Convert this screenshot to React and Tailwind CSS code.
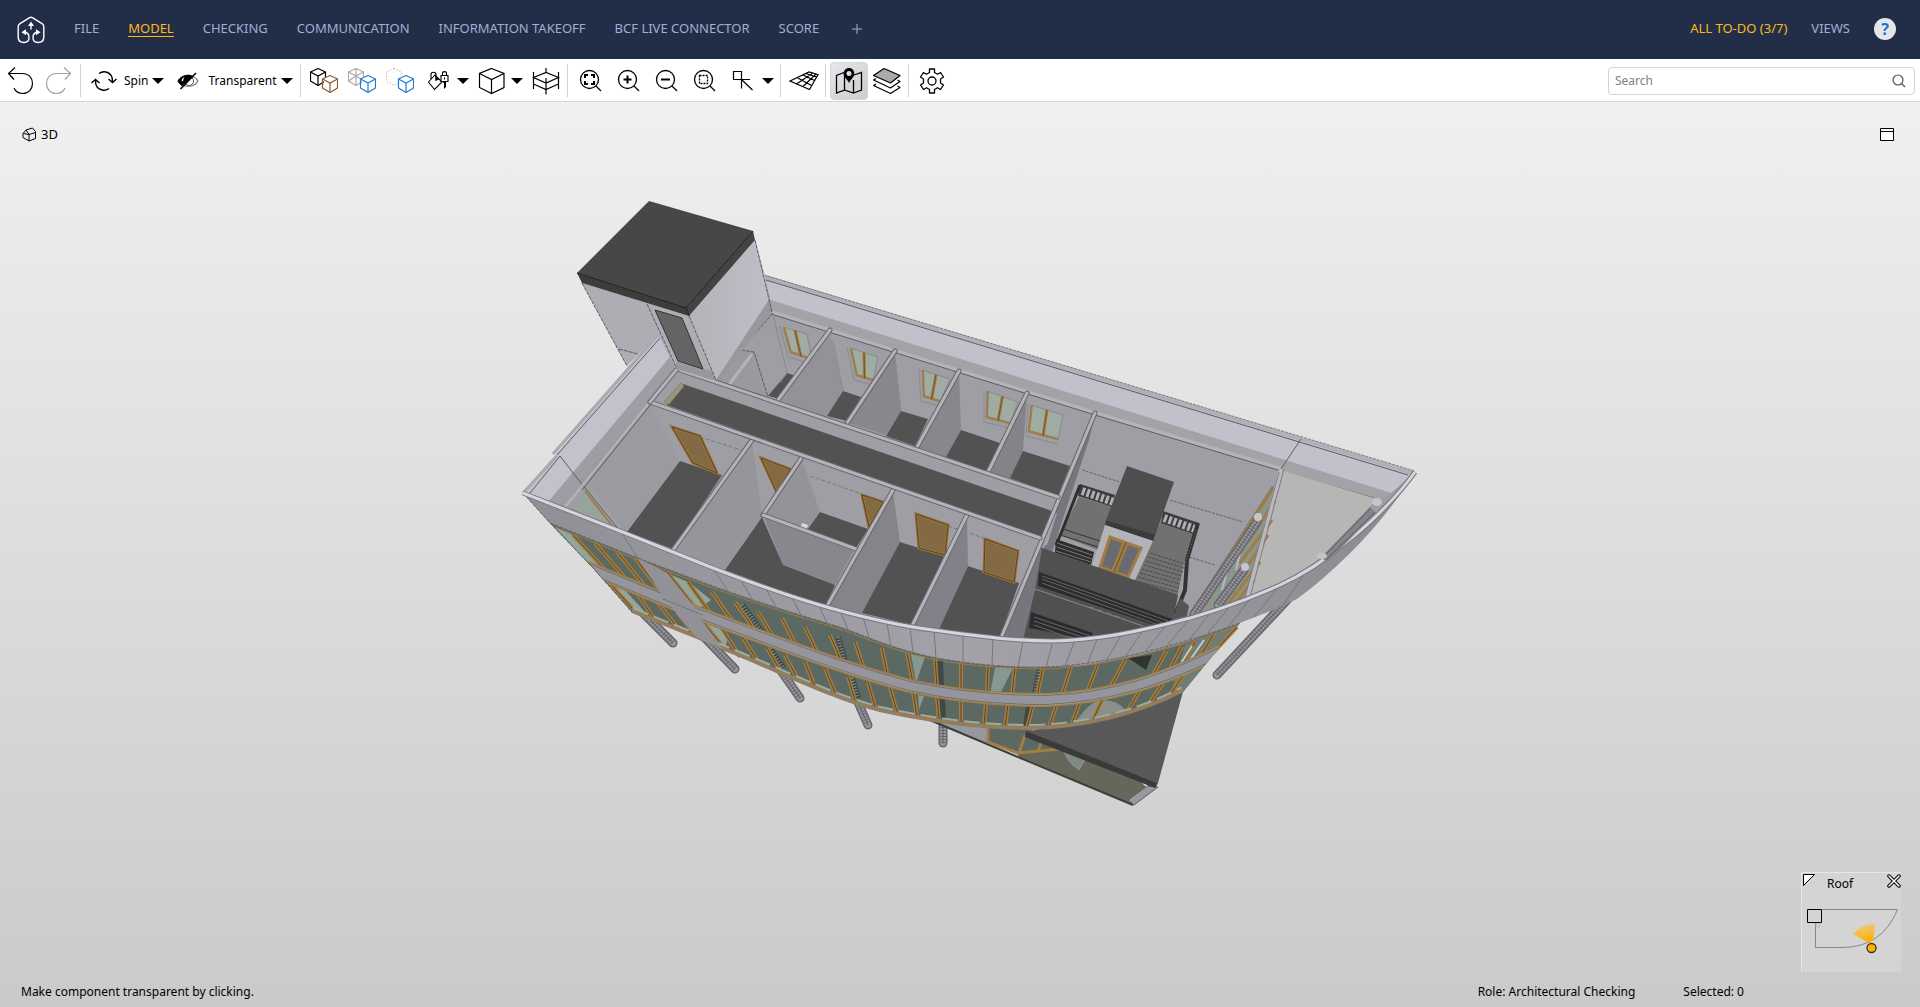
import React, { useState } from "react";
import clsx from "clsx";

const menuItems = [
  "FILE",
  "MODEL",
  "CHECKING",
  "COMMUNICATION",
  "INFORMATION TAKEOFF",
  "BCF LIVE CONNECTOR",
  "SCORE",
];

/* ---------- icons ---------- */

function Icon({ children, size = 28, className }) {
  return (
    <svg
      width={size}
      height={size}
      viewBox={`0 0 ${size} ${size}`}
      fill="none"
      stroke="currentColor"
      className={clsx("shrink-0", className)}
      aria-hidden="true"
    >
      {children}
    </svg>
  );
}

function Logo() {
  return (
    <Icon className="text-white">
      <g strokeWidth="1.4" strokeLinejoin="round" strokeLinecap="round">
        <path d="M7 26.500C3 26.500 1.200 24.500 1.200 21V10.500Q1.200 8.700 2.600 7.800L12.600 1.600Q14 .8 15.400 1.600L25.400 7.800Q26.800 8.700 26.800 10.500V21C26.800 24.500 25 26.500 21 26.500C17.500 26.500 16 24.500 16 21.500C16 18 17.800 16.300 21 16.300" />
        <path d="M7 26.500C10.500 26.500 12 24.500 12 21.500C12 18 10.200 16.300 7 16.300" />
        <path d="M14 13V8" />
      </g>
      <g fill="currentColor" stroke="none">
        <path d="M14 5.500L17 10H11Z" />
        <path d="M4.500 16.300L9 13.300V19.300Z" />
        <path d="M23.500 16.300L19 13.300V19.300Z" />
      </g>
    </Icon>
  );
}

function Caret() {
  return (
    <svg width="12" height="6" viewBox="0 0 12 6" fill="black" aria-hidden="true">
      <path d="M0 0H12L6 6Z" />
    </svg>
  );
}

function UndoIcon() {
  return (
    <Icon>
      <path d="M8 0.500L1.500 6.500L7 12.500M1.500 6.500H15C22 6.500 25.500 11 25.500 16.500C25.500 22 21.500 26.500 16 26.500C11.500 26.500 8.500 24.500 7 21" strokeWidth="1.2" />
    </Icon>
  );
}

function RedoIcon() {
  return (
    <Icon className="text-gray-400">
      <path d="M19 0.500L25.500 6.500L20 12.500M25.500 6.500H12C5 6.500 1.500 11 1.500 16.500C1.500 22 5.500 26.500 11 26.500C15.500 26.500 18.500 24.500 20 21" strokeWidth="1.2" />
    </Icon>
  );
}

function SpinIcon() {
  return (
    <Icon>
      <g strokeWidth="1.4">
        <path d="M9 6.500C13 3.500 19 4.500 21.500 9C22.300 10.500 22.500 12 22.500 14.500M18.500 12L22.500 15.500L26.500 12" />
        <path d="M19 21.500C15 24.500 9 23.500 6.500 19C5.700 17.500 5.500 16 5.500 13.500M1.500 16L5.500 12.500L9.500 16" />
      </g>
    </Icon>
  );
}

function EyeOffIcon() {
  return (
    <Icon>
      <path d="M4 14C8 7 20 7 24 14C20 21 8 21 4 14Z" strokeWidth="1.2" stroke="#777" />
      <path d="M4 14C7.500 8 15 7 19 9.500L8 18.500C6.500 17.500 5 16 4 14Z" fill="black" stroke="black" />
      <path d="M7.500 13.500C8 11.500 9 10.500 11 10L9 14.500Z" fill="white" stroke="none" />
      <circle cx="15" cy="14" r="4.500" stroke="#555" />
      <path d="M18 10A4.500 4.500 0 0 0 11 16Z" fill="black" />
      <path d="M22 6L6.500 22" strokeWidth="1.600" />
    </Icon>
  );
}

function MiniCube({ x, y, stroke, ghost, dotted }) {
  return (
    <g transform={`translate(${x} ${y})`} stroke={stroke} strokeWidth="1.2" strokeDasharray={dotted ? "1 2" : undefined}>
      <path d="M8 0.500L15.500 4V13L8 17.500L0.500 13V4Z" strokeLinejoin="round" />
      {!dotted && <path d="M0.500 4L8 8L15.500 4M8 8V17.500" />}
      {ghost && <path d="M8 0.500V8M0.500 13L8 8L15.500 13" />}
    </g>
  );
}

function PaintLockIcon() {
  return (
    <Icon>
      <g strokeWidth="1.1">
        <path d="M4.500 15L11 8L18 15L10.500 22.500Z" />
        <path d="M7 12V7.500C7 4.500 12 4.500 12 7.500V14" />
        <path d="M18.500 9V6.500C18.500 4 22.500 4 22.500 6.500V9" />
        <path d="M17 8.500H24V14.500H17Z" fill="white" />
        <path d="M20.500 10.500V12.500" />
      </g>
      <path d="M11.500 9L15.500 12.500L11.500 13.500ZM18 14.500H22V20L20 22V16Z" fill="black" stroke="none" />
    </Icon>
  );
}

function CubeIcon() {
  return (
    <Icon>
      <path d="M13.500 1.500L26 6.500V20.500L13.500 26.500L1.500 20.500V6.500ZM1.500 6.500L13.500 12.500L26 6.500M13.500 12.500V26.500" strokeWidth="1.2" />
    </Icon>
  );
}

function SectionIcon() {
  return (
    <Icon>
      <path d="M1.500 5V22M26.500 5V22M14 1V5M14 11V27.500M1.500 10.500L14 5.500L26.500 10.500L14 16ZM1.500 17L14 22.500L26.500 17" strokeWidth="1.200" />
    </Icon>
  );
}

function ZoomIcon({ children }) {
  return (
    <Icon>
      <circle cx="12.500" cy="12.500" r="9" strokeWidth="1.300" />
      <path d="M19 19L24 24" strokeWidth="1.300" />
      {children}
    </Icon>
  );
}

function PickIcon() {
  return (
    <Icon>
      <path d="M4.500 4.500H12.500V12.500H4.500ZM12.500 21.500V12.500H21M12.500 12.500L23.500 23" strokeWidth="1.200" />
    </Icon>
  );
}

function GridPlaneIcon() {
  return (
    <Icon size={30}>
      <path d="M1 15L20 6L29 8.500L20.500 23.500ZM8 11.500L22.500 19.500M14 9L25.500 14.500M7.500 18L24 7M14 20.500L27 8M17 7.500L27.500 11" strokeWidth="1.200" />
    </Icon>
  );
}

function MapPinIcon() {
  return (
    <Icon>
      <path d="M9.500 5.500V23L1.500 26V8.500L9 5.500M9.500 23L18.500 26V13M18.500 26L26.500 23V5.500L19 8" strokeWidth="1.300" />
      <path d="M14 1C17.500 1 19.300 3.500 19.300 6.500C19.300 10 16 12 14 16C12 12 8.700 10 8.700 6.500C8.700 3.500 10.500 1 14 1ZM14 4A2.500 2.500 0 1 0 14 9A2.500 2.500 0 1 0 14 4Z" fill="black" fillRule="evenodd" stroke="none" />
    </Icon>
  );
}

function LayersIcon() {
  return (
    <Icon>
      <g strokeWidth="1.200" strokeLinejoin="round">
        <path d="M3 17L0.500 18.500L17.500 26.500L27 20.500L24.500 19" />
        <path d="M3 11.500L0.500 13L17.500 21L27 14.500L24.500 13" fill="white" />
        <path d="M11 1.500L27 8.500L17.500 16L0.500 8.500Z" fill="#aaaaaa" />
      </g>
    </Icon>
  );
}

function GearIcon() {
  return (
    <Icon>
      <g strokeWidth="1.300" strokeLinejoin="round">
        <circle cx="14" cy="14" r="4" />
        <path d="M11.500 2H16.500V5.500L19.500 7.200L22.500 5.500L25.500 10L22.500 12V16L25.500 18L22.500 22.500L19.500 20.800L16.500 22.500V26H11.500V22.500L8.500 20.800L5.500 22.500L2.500 18L5.500 16V12L2.500 10L5.500 5.500L8.500 7.200L11.500 5.500Z" />
      </g>
    </Icon>
  );
}

/* ---------- toolbar ---------- */

function ToolButton({ label, active, children }) {
  return (
    <button
      type="button"
      aria-label={label}
      className={clsx(
        "flex h-[38px] w-[38px] shrink-0 items-center justify-center rounded",
        active && "border border-gray-300 bg-linear-to-br from-gray-200 to-[#cccccc]"
      )}
    >
      {children}
    </button>
  );
}

function MenuCaret({ label }) {
  return (
    <button type="button" aria-label={label} className="mr-1 flex h-[38px] w-3 shrink-0 items-center">
      <Caret />
    </button>
  );
}

function ModeButton({ icon, children }) {
  return (
    <button type="button" className="mr-[5px] flex h-[38px] shrink-0 items-center">
      <span className="flex w-[38px] justify-center">{icon}</span>
      <span className="ml-px">{children}</span>
      <span className="ml-1">
        <Caret />
      </span>
    </button>
  );
}

function Separator() {
  return <div className="mr-1 ml-0.5 h-[33px] w-px shrink-0 bg-[#d0d0d0]" />;
}

function Toolbar() {
  const [query, setQuery] = useState("");

  return (
    <div className="flex h-[43px] shrink-0 items-center border-b border-[#d4d4d4] bg-white pt-px pr-[5px] pl-0.5">
      <ToolButton label="Undo"><UndoIcon /></ToolButton>
      <ToolButton label="Redo"><RedoIcon /></ToolButton>
      <Separator />
      <ModeButton icon={<SpinIcon />}>Spin</ModeButton>
      <ModeButton icon={<EyeOffIcon />}>Transparent</ModeButton>
      <Separator />
      <ToolButton label="Show all">
        <Icon>
          <MiniCube x={0} y={1} stroke="black" />
          <rect x="14" y="10" width="12" height="14" fill="white" stroke="none" />
          <MiniCube x={12} y={8} stroke="#8a5a33" />
        </Icon>
      </ToolButton>
      <ToolButton label="Show others transparent">
        <Icon>
          <MiniCube x={0} y={1} stroke="#aaaaaa" ghost />
          <rect x="14" y="10" width="12" height="14" fill="white" stroke="none" />
          <MiniCube x={12} y={8} stroke="#1b7fd6" />
        </Icon>
      </ToolButton>
      <ToolButton label="Hide others">
        <Icon>
          <MiniCube x={0} y={1} stroke="#aaaaaa" dotted />
          <rect x="12" y="9" width="14" height="16" fill="white" stroke="none" />
          <MiniCube x={12} y={8} stroke="#1b7fd6" />
        </Icon>
      </ToolButton>
      <ToolButton label="Coloring"><PaintLockIcon /></ToolButton>
      <MenuCaret label="Coloring options" />
      <ToolButton label="View direction"><CubeIcon /></ToolButton>
      <MenuCaret label="View direction options" />
      <ToolButton label="Section box"><SectionIcon /></ToolButton>
      <Separator />
      <ToolButton label="Zoom to fit">
        <ZoomIcon>
          <path d="M8 11V8H11M14 8H17V11M17 14V17H14M11 17H8V14" strokeWidth="2" />
        </ZoomIcon>
      </ToolButton>
      <ToolButton label="Zoom in">
        <ZoomIcon>
          <path d="M8.500 12.500H16.500M12.500 8.500V16.500" strokeWidth="2" />
        </ZoomIcon>
      </ToolButton>
      <ToolButton label="Zoom out">
        <ZoomIcon>
          <path d="M8 12.500H17" strokeWidth="2" />
        </ZoomIcon>
      </ToolButton>
      <ToolButton label="Zoom window">
        <ZoomIcon>
          <path d="M8.500 8.500H16.500V16.500H8.500Z" strokeWidth="1.300" strokeDasharray="2 1" />
        </ZoomIcon>
      </ToolButton>
      <ToolButton label="Pick"><PickIcon /></ToolButton>
      <MenuCaret label="Pick options" />
      <Separator />
      <ToolButton label="Grid"><GridPlaneIcon /></ToolButton>
      <Separator />
      <ToolButton label="Navigation map" active><MapPinIcon /></ToolButton>
      <ToolButton label="Floors"><LayersIcon /></ToolButton>
      <Separator />
      <ToolButton label="Settings"><GearIcon /></ToolButton>

      <label className="ml-auto flex h-7 w-[307px] items-center rounded border border-[#d4d4d4] px-1.5">
        <input
          type="search"
          aria-label="Search"
          placeholder="Search"
          value={query}
          onChange={(e) => setQuery(e.target.value)}
          className="min-w-0 flex-1 bg-transparent outline-none placeholder:text-[#808080]"
        />
        <Icon size={18} className="text-gray-600">
          <circle cx="8" cy="8" r="5" strokeWidth="1.200" />
          <path d="M11.500 11.500L15 15" strokeWidth="1.200" />
        </Icon>
      </label>
    </div>
  );
}

/* ---------- 3D model ---------- */

const EDGE = "#5c5b61";
const CAP = "#b4b3ba";
const FLOOR = "#525252";
const WOOD = "#a17c43";
const GLASS = "#5c6862";

const rimPath =
  "M523 493L620 531L713 568C770 590 805 601 830 608C870 619 900 626 933 630C970 635 1010 641 1053 641C1095 640 1130 633 1167 624C1200 616 1240 603 1280 585C1310 571 1330 556 1345 543C1365 528 1395 500 1415 472";

const bandPath =
  rimPath +
  "C1392 510 1350 560 1297 599C1270 612 1255 617 1240 623C1200 638 1160 652 1113 660C1090 665 1070 667 1047 667C1010 668 970 664 937 658C900 651 870 638 843 628C800 615 760 603 710 585L638 558L550 523Z";

const facadePath =
  "M550 523L638 558L710 585C760 603 800 615 843 628C870 638 900 651 937 658C970 664 1010 668 1047 667C1110 664 1180 645 1240 623L1213 655L1183 692C1140 714 1080 727 1030 729C980 729 930 721 880 710C830 697 780 670 727 650L632 612L593 568Z";

const spandrel =
  "M585 567L663 599L697 613C760 636 840 668 910 686C950 695 1000 700 1047 700C1110 697 1160 682 1222 651";

const sill =
  "M632 611L697 637L727 650C780 671 830 697 880 710C930 721 980 728 1030 728C1085 727 1140 713 1183 690";

const upperHead =
  "M555 527L638 560L710 587C760 605 800 617 843 630C870 640 900 653 937 660C970 666 1010 669 1047 669C1110 666 1180 647 1237 626";

const mullions = [
  [573, 535, 607, 572], [595, 543, 627, 580], [617, 552, 648, 590], [635, 558, 665, 597],
  [668, 573, 697, 610], [688, 582, 713, 617], [712, 592, 735, 625], [735, 602, 757, 633],
  [758, 612, 777, 643], [782, 618, 798, 650], [805, 627, 820, 658], [830, 635, 843, 665],
  [855, 642, 865, 672], [882, 648, 888, 678], [907, 653, 913, 683], [935, 658, 937, 687],
  [961, 662, 961, 691], [988, 665, 987, 693], [1015, 667, 1012, 695], [1043, 667, 1037, 696],
  [1071, 667, 1062, 695], [1098, 664, 1087, 692], [1125, 660, 1110, 688], [1167, 650, 1150, 680],
  [1182, 646, 1168, 673], [1195, 642, 1182, 665], [1213, 635, 1197, 662], [1237, 627, 1213, 653],
  [607, 580, 632, 608], [637, 593, 653, 617], [658, 603, 677, 627], [677, 612, 697, 637],
  [703, 622, 725, 649], [723, 630, 740, 657], [743, 638, 759, 663], [767, 648, 780, 670],
  [785, 655, 797, 678], [805, 662, 815, 687], [825, 668, 835, 693], [848, 677, 855, 700],
  [868, 682, 875, 707], [890, 687, 897, 712], [913, 692, 917, 717], [937, 697, 939, 720],
  [961, 700, 961, 723], [986, 703, 984, 725], [1008, 704, 1005, 727], [1033, 705, 1027, 728],
  [1057, 704, 1049, 727], [1080, 702, 1072, 723], [1103, 698, 1093, 720], [1140, 690, 1127, 712],
  [1163, 683, 1148, 705], [1185, 673, 1170, 695],
];

const panelJoints = [
  [620, 531, 638, 558], [713, 568, 730, 594], [739, 577, 754, 602], [765, 587, 778, 611],
  [791, 596, 803, 619], [818, 604, 828, 625], [840, 611, 849, 632], [863, 617, 870, 641],
  [887, 623, 891, 647], [910, 627, 913, 653], [934, 631, 936, 658], [963, 635, 963, 663],
  [993, 638, 992, 666], [1023, 641, 1018, 667], [1053, 641, 1046, 667], [1075, 640, 1065, 666],
  [1098, 637, 1087, 665], [1122, 634, 1106, 661], [1144, 629, 1125, 657], [1167, 624, 1145, 652],
  [1189, 619, 1167, 646], [1210, 613, 1190, 639], [1231, 605, 1208, 633], [1250, 599, 1229, 626],
  [1280, 585, 1254, 617], [1305, 573, 1283, 605],
];

const columns = [
  [640, 610, 673, 643], [705, 638, 735, 669], [779, 668, 800, 698], [857, 700, 868, 725],
  [943, 718, 943, 743], [1374, 507, 1217, 675],
];

const partitions = [
  [830, 330, 778, 400], [895, 351, 847, 423], [959, 371, 917, 447], [1027, 393, 988, 472],
  [752, 440, 673, 550], [802, 457, 763, 515], [763, 515, 856, 549], [893, 490, 827, 606],
  [967, 515, 912, 626], [1095, 413, 1001, 638], [677, 369, 1058, 497], [650, 402, 1040, 538],
  [650, 402, 677, 369],
];

const rooms = [
  // side faces of the partition walls
  ["830,332 843,391 827,418 779,400", "#939299"],
  ["895,353 901,411 886,435 848,423", "#88878e"],
  ["959,373 961,430 946,457 917,447", "#88878e"],
  ["1027,395 1023,451 1010,478 988,472", "#84838a"],
  ["752,442 762,515 725,570 673,549", "#96959c"],
  ["802,459 820,512 808,529 763,515", "#949399"],
  ["763,515 783,565 835,585 855,549", "#88878d"],
  ["893,492 900,542 862,614 827,606", "#85848b"],
  ["967,517 968,566 939,629 912,626", "#82818a"],
  ["650,404 680,461 627,533 582,478", "#9b9aa0"],
  // floors
  ["787,373 796,376 780,399 768,396", FLOOR],
  ["843,391 861,397 847,421 827,416", FLOOR],
  ["901,411 928,419 915,446 886,436", FLOOR],
  ["961,430 1000,443 986,471 946,457", FLOOR],
  ["1023,451 1070,466 1058,496 1010,478", FLOOR],
  ["683,384 1055,512 1042,537 667,405", FLOOR],
  ["680,461 722,475 673,549 627,532", FLOOR],
  ["762,517 783,565 835,585 825,607 725,570", FLOOR],
  ["820,512 868,529 856,548 808,529", FLOOR],
  ["900,542 944,556 912,625 862,613", FLOOR],
  ["968,566 1019,583 1000,637 939,629", FLOOR],
];

const windows = [
  [783, 327, 807, 334, 812, 360, 790, 353],
  [850, 348, 878, 357, 873, 381, 856, 376],
  [922, 370, 950, 379, 940, 402, 923, 397],
  [987, 391, 1018, 402, 1010, 424, 986, 418],
  [1031, 405, 1063, 415, 1058, 440, 1028, 432],
];

const doors = [
  "672,427 700,436 717,473 693,463",
  "761,458 790,469 777,493",
  "862,495 883,502 869,527",
  "916,514 948,525 945,555 919,548",
  "985,539 1018,551 1014,582 984,572",
];

function Segment({ points: [x1, y1, x2, y2], ...rest }) {
  return <line x1={x1} y1={y1} x2={x2} y2={y2} {...rest} />;
}

function Column({ points }) {
  return (
    <g strokeLinecap="round">
      <Segment points={points} stroke="#66656b" strokeWidth="9" />
      <Segment points={points} stroke="#97969d" strokeWidth="6" />
      <Segment points={points} stroke="#6c6b71" strokeWidth="6" strokeDasharray="1 2" strokeLinecap="butt" />
      <Segment points={points} stroke="#5f5e64" strokeWidth="1" />
    </g>
  );
}

function Window({ points: [ax, ay, bx, by, cx, cy, dx, dy] }) {
  const mx = (ax + bx) / 2;
  const my = (ay + by) / 2;
  const nx = (cx + dx) / 2;
  const ny = (cy + dy) / 2;
  return (
    <g>
      <path d={`M${ax - 3} ${ay - 1}L${dx - 2} ${dy + 4}L${cx} ${cy + 4}`} stroke="#8a8990" fill="none" />
      <path d={`M${ax} ${ay}L${bx} ${by}L${cx} ${cy}L${dx} ${dy}Z`} fill="#9faca3" stroke="#858c87" strokeWidth="1" />
      <path d={`M${ax + 1} ${ay}L${dx + 1} ${dy - 1}L${cx} ${cy - 1}`} stroke={WOOD} strokeWidth="2" fill="none" />
      <path d={`M${mx} ${my}L${nx} ${ny}`} stroke={WOOD} strokeWidth="3" />
      <path d={`M${mx} ${my}L${nx} ${ny}`} stroke="#775322" strokeWidth="1" />
    </g>
  );
}

function Stairwell() {
  return (
    <g>
      <polygon points="1095,415 1089,440 1056,540 1023,640 1001,638" fill="#77767c" />
      <path d="M1082 470L1120 482M1170 500L1243 522M1189 557L1215 565" stroke="#66656b" strokeDasharray="3 1" />
      <polygon points="1079,497 1113,507 1098,550 1060,535" fill="#717171" />
      <polygon points="1161,521 1196,533 1184,563 1177,597 1134,582" fill="#717171" />
      {[0, 1, 2, 3, 4, 5, 6, 7, 8].map((i) => (
        <line
          key={i}
          x1={1150 - i * 2}
          y1={553 + i * 4}
          x2={1185 - i}
          y2={564 + i * 4}
          stroke="#4a4a4a"
          strokeDasharray="3 1"
        />
      ))}
      {/* balustrades */}
      <polygon points="1080,484 1115,495 1113,507 1078,496" fill="#3c3c3c" />
      <path d="M1082 491L1114 502" stroke="#b0afb5" strokeWidth="8" strokeDasharray="3 2" />
      <polygon points="1163,511 1199,523 1194,534 1161,523" fill="#3c3c3c" />
      <path d="M1164 518L1195 529" stroke="#b0afb5" strokeWidth="8" strokeDasharray="3 2" />
      <path d="M1080 485L1062 531L1056 545" stroke="#2f2f2f" strokeWidth="3" fill="none" />
      <path d="M1198 523L1187 560L1185 590L1175 615" stroke="#333333" strokeWidth="4" fill="none" />
      <path d="M1196 530L1185 565" stroke="#77767c" fill="none" strokeDasharray="1 2" />
      <path d="M1063 529L1100 541M1060 535L1098 547" stroke="#333333" fill="none" />
      <polygon points="1056,539 1094,552 1091,565 1055,553" fill="#2e2e2e" />
      <path d="M1057 543L1092 555M1057 547L1092 559M1056 551L1091 562" stroke="#77767c" />
      {/* lift shaft */}
      <polygon points="1127,466 1174,482 1155,536 1106,520" fill="#4e4e4e" />
      <polygon points="1106,520 1155,535 1153,541 1105,525" fill="#3b3b3b" />
      <polygon points="1105,525 1153,541 1135,580 1092,566" fill="#b3b2b9" />
      <polygon points="1110,537 1141,548 1128,577 1100,567" fill="#6b6a70" stroke={WOOD} strokeWidth="3" />
      <path d="M1126 542L1114 572" stroke={WOOD} strokeWidth="6" />
      <path d="M1126 542L1114 572" stroke="#6b4b1e" />
      {/* gallery floors */}
      <polygon points="1042,548 1178,595 1173,620 1143,630 1090,638 1023,640 1035,590" fill="#505050" />
      <polygon points="1039,572 1172,619 1166,629 1038,586" fill="#2c2c2c" />
      <path d="M1042 576L1168 621M1042 579L1166 624M1042 583L1164 627" stroke="#66656b" />
      <path d="M1035 589L1143 626" stroke="#8b8a90" />
      <path d="M1090 607L1125 619" stroke={WOOD} strokeDasharray="4 5" />
      <polygon points="1031,612 1093,633 1090,640 1029,628" fill="#2c2c2c" />
      <path d="M1034 617L1090 636M1034 621L1085 638M1034 625L1070 638" stroke="#66656b" />
      <path d="M1056 513L1046 545M1052 520L1043 548" stroke="#a5a4aa" strokeWidth="2" />
      <polygon points="1180,598 1189,606 1186,620 1172,622" fill="#555555" />
    </g>
  );
}

function EastGlazing() {
  return (
    <g>
      <polygon points="1273,487 1279,478 1246,600 1188,618 1206,595" fill="#8a958e" />
      <path d="M1273 487L1190 616" stroke="#77767c" strokeWidth="3" />
      <path d="M1272 490L1195 609M1275 500L1248 542M1272 520L1240 563M1268 535L1240 577M1260 562L1225 608M1254 580L1236 602M1238 550L1205 605" stroke={WOOD} strokeWidth="3" />
      <path d="M1244 535L1236 570M1230 560L1222 590" stroke="#b9b8bf" strokeWidth="2" />
      <Column points={[1257, 522, 1194, 614]} />
      <Column points={[1244, 570, 1218, 605]} />
      <circle cx="1258" cy="517" r="4" fill="#c6c5cb" />
      <circle cx="1245" cy="567" r="4" fill="#c6c5cb" />
      <path d="M1281 469L1247 598" stroke="#b9b8bf" strokeWidth="4" />
      <path d="M1284 469L1250 597M1279 472L1245 597" stroke="#7d7c82" strokeWidth="1" />
    </g>
  );
}

function Entrance() {
  return (
    <g>
      <polygon points="925,718 990,725 990,744 1018,756" fill="#98979e" />
      <path d="M925 718L1018 757" stroke="#3a3a3a" strokeWidth="2" />
      <polygon points="1018,756 1028,730 1155,787 1133,805" fill="#66675a" />
      <path d="M1018 757L1133 805" stroke="#3e3e36" strokeWidth="2" />
      <path d="M1064 750Q1068 762 1079 769L1086 757Z" fill="#7e8a80" stroke="#8b8a90" strokeWidth="2" />
      <polygon points="988,727 1030,729 1060,750 1019,755 988,742" fill={GLASS} />
      <path d="M988 729V742L1018 753L1060 749M1025 735L1019 753M1042 740L1038 751" stroke={WOOD} strokeWidth="3" fill="none" />
      <polygon points="1147,786 1158,787 1134,805 1128,800" fill="#98979e" stroke={EDGE} />
      <path d="M1143 783L1147 786" stroke="#d8d8de" fill="none" strokeWidth="2" />
      <polygon points="1026,732 1100,715 1184,688 1158,783" fill="#585858" />
      <polygon points="1026,731 1158,783 1155,788 1025,737" fill="#3a3a3a" />
    </g>
  );
}

function BuildingModel() {
  return (
    <svg
      viewBox="0 102 1920 905"
      className="absolute inset-0 h-full w-full"
      role="img"
      aria-label="Building model"
      fill="none"
    >
      <defs>
        <linearGradient id="towerSide" x1="0" y1="0" x2="1" y2="0">
          <stop offset="0" stopColor="#b3b3b9" />
          <stop offset="1" stopColor="#bebec7" />
        </linearGradient>
        <linearGradient id="band" x1="0" y1="0" x2="1" y2="0">
          <stop offset="0" stopColor="#908f95" />
          <stop offset="0.5" stopColor="#a2a2a8" />
          <stop offset="1" stopColor="#8b8a91" />
        </linearGradient>
        <clipPath id="facade">
          <path d={facadePath} />
        </clipPath>
      </defs>

      {columns.map((c, i) => (
        <Column key={i} points={c} />
      ))}
      <Entrance />

      {/* shell */}
      <path d={`${rimPath}L765 275L716 380L676 369L658 335Z`} fill="#9f9ea4" />
      <polygon points="765,275 1415,472 1391,493 770,300" fill="#c1c1cb" />
      <polygon points="770,300 1391,493 1378,500 771,313" fill="#a3a2a7" />
      <path d="M765 277L1413 473" stroke="#b0b0b7" strokeWidth="4" />
      <path d="M764 275L1415 471" stroke="#7d7c82" strokeWidth="1" strokeDasharray="3 1" />
      <path d="M766 280L1408 475" stroke={EDGE} strokeWidth="1" />
      <path d="M771 312L895 351L1095 413L1281 469" stroke={CAP} strokeWidth="4" />
      <path d="M771 314L1095 415L1281 471L1377 499" stroke={EDGE} />
      <path d="M1301 439L1281 469" stroke={EDGE} />
      <path d="M1281 470L1377 499L1322 557Q1285 583 1247 598Z" fill="#b6b6b5" />
      <polygon points="523,493 658,335 670,357 553,503" fill="#c2c2cd" />
      <polygon points="670,357 677,369 564,508 548,502" fill="#9e9da3" />
      <path d="M523 493L557 456M553 454L658 335" stroke="#a9a9b0" strokeWidth="3" />
      <path d="M530 493L560 456L577 478L620 531M557 455L660 338" stroke={EDGE} />
      <polygon points="571,509 585,491 612,527" fill="#97a39b" />
      <path d="M585 491L613 527M571 509L577 513" stroke={WOOD} strokeWidth="2" />

      {/* interior */}
      {rooms.map(([points, fill]) => (
        <polygon key={points} points={points} fill={fill} />
      ))}
      <path d="M649 403L565 507" stroke={CAP} strokeWidth="2" />
      <path d="M651 404L582 490" stroke={EDGE} />
      <polygon points="664,402 681,383 684,386 669,404" fill="#8d9991" stroke={WOOD} />
      <polygon points="716,381 741,350 754,352 768,397" fill="#9a999f" />
      <path d="M741 350L754 352L768 397M773 313L741 350" stroke={EDGE} strokeDasharray="4 1" />
      <path d="M752 354L728 386" stroke={CAP} strokeWidth="3" />
      <path d="M773 314L787 373L780 383M833 340L843 391M895 357L901 411" stroke="#8b8a90" />
      <path d="M700 437L741 450M810 476L862 494M948 526L960 530M970 533L985 539" stroke="#77767c" strokeDasharray="4 2" />
      {windows.map((w) => (
        <Window key={w.join()} points={w} />
      ))}
      {doors.map((d) => (
        <g key={d}>
          <polygon points={d} fill="#846a42" stroke="#967442" strokeWidth="3" />
          <polygon points={d} stroke="#5e431b" strokeWidth="1" />
        </g>
      ))}
      <path d="M800 529L802 523L808 525L806 531Z" fill="#d9d9d9" />
      <Stairwell />
      <EastGlazing />
      {partitions.map((p) => (
        <g key={p.join()}>
          <Segment points={p} stroke="#66656b" strokeWidth="5" strokeLinecap="round" />
          <Segment points={p} stroke={CAP} strokeWidth="3" strokeLinecap="round" />
        </g>
      ))}

      {/* lift tower */}
      <polygon points="582,283 689,316 716,380 676,369 658,335 627,366" fill="#adadb3" />
      <path d="M582 283L627 366M619 349L638 354M647 304L677 369" stroke={EDGE} strokeDasharray="4 1" />
      <polygon points="676,362 712,371 716,381 677,369" fill="#98979d" />
      <polygon points="655,310 682,318 703,369 678,361" fill="#646464" stroke="#333333" />
      <polygon points="689,316 755,240 765,275 769,300 716,380" fill="url(#towerSide)" />
      <polygon points="769,300 772,312 720,380 716,380" fill="#98979d" />
      <path d="M689 316L716 380M755 240L772 312" stroke={EDGE} strokeDasharray="4 1" />
      <polygon points="649,201 753,231 686,308 577,273" fill="#474747" />
      <polygon points="577,273 686,308 689,316 582,283" fill="#3c3c3c" />
      <polygon points="686,308 753,231 755,240 689,316" fill="#434343" />
      <path d="M577 273L686 308L753 231M686 308L689 316" stroke="#1e1e1e" />

      {/* curved facade */}
      <path d={facadePath} fill={GLASS} />
      <path d="M555 527L575 536L612 576L593 568ZM607 580L622 587L645 612L632 608ZM667 573L690 583L711 600L697 610ZM703 622L720 629L728 637L725 649Z" fill="#93a69b" />
      <path d="M911 654L925 657L916 683ZM995 668L1013 668L1000 694L990 694ZM918 695L924 696L919 710Z" fill="#879890" />
      <path d="M1080 716Q1092 700 1103 700Q1118 700 1126 711Q1105 720 1075 722Z" fill="#89908c" />
      <path d="M1128 658L1152 655L1146 670Z" fill="#30352f" />
      <path d="M1185 645L1240 623L1183 692L1170 695Z" fill="#6f7d75" />
      <path d="M742 605L762 632M838 637L846 665M940 660L941 686M1040 668L1035 694M770 649L783 668M852 678L858 698M942 697L943 718M1029 706L1026 727" stroke="#3f4a48" strokeWidth="6" />
      <path d="M742 605L762 632M838 637L846 665M1040 668L1035 694M770 649L783 668M852 678L858 698" stroke="#869190" strokeWidth="4" strokeDasharray="1 2" />
      {mullions.map((m) => (
        <g key={m.join()}>
          <Segment points={m} stroke={WOOD} strokeWidth="4" />
          <Segment points={m} stroke="#604518" strokeWidth="1" />
        </g>
      ))}
      <path d="M1204 640L1190 660M1192 646L1180 665" stroke="#c3ccc8" strokeWidth="2" />
      <path d={upperHead} stroke={WOOD} strokeWidth="1" />
      <g clipPath="url(#facade)">
        <path d={spandrel} stroke={WOOD} strokeWidth="14" />
        <path d={spandrel} stroke="#a3aa98" strokeWidth="11" />
        <path d={spandrel} stroke="#6f6e74" strokeWidth="10" />
        <path d={spandrel} stroke="#96959c" strokeWidth="8" />
        <path d={sill} stroke="#a3aa98" strokeWidth="8" strokeDasharray="16 6" />
      </g>
      <path d={sill} stroke="#7f7e84" strokeWidth="4" />
      <path d={sill} stroke={WOOD} strokeWidth="2" />
      <polygon points="638,558 667,573 697,610 703,622 723,649 697,638 663,597" fill="#929198" />
      <path d="M663 599L703 615" stroke="#6f6e74" strokeDasharray="4 1" />
      <path d={bandPath} fill="url(#band)" />
      <path d="M550 523L638 558L710 585C760 603 800 615 843 628C870 638 900 651 937 658C970 664 1010 668 1047 667C1110 664 1180 645 1240 623" stroke="#66656b" strokeDasharray="4 1" />
      {panelJoints.map((j) => (
        <Segment key={j.join()} points={j} stroke="#77767c" />
      ))}
      <path d="M523 493L550 523L593 568L632 612" stroke={EDGE} strokeDasharray="4 1" />
      <path d={rimPath} stroke="#77767c" strokeWidth="5" />
      <path d={rimPath} stroke="#d6d5df" strokeWidth="3" />
      <ellipse cx="1377" cy="502" rx="5" ry="4" fill="#c6c5cb" />
      <path d="M1373 510L1324 560" stroke="#85848a" strokeWidth="8" />
      <path d="M1371 508L1322 558M1375 512L1326 560" stroke={EDGE} />
      <ellipse cx="1322" cy="556" rx="5" ry="3" fill="#c6c5cb" />
    </svg>
  );
}

/* ---------- viewport ---------- */

function Minimap() {
  return (
    <section
      aria-label="Navigation map"
      className="relative mr-[19px] h-[100px] w-[100px] border-t border-l border-[#e6e6e6] bg-[#d4d4d4]"
    >
      <div className="flex h-6 items-start pt-px pl-px">
        <button type="button" aria-label="Resize map">
          <svg width="12" height="12" viewBox="0 0 12 12" fill="white" stroke="black">
            <path d="M0.500 0.500H11.500L0.500 11.500Z" />
          </svg>
        </button>
        <h2 className="mt-px mr-auto ml-3">Roof</h2>
        <button type="button" aria-label="Close map">
          <svg width="14" height="14" viewBox="0 0 14 14" fill="none" strokeLinecap="round">
            <path d="M2 2L12 12M12 2L2 12" stroke="black" strokeWidth="3.500" />
            <path d="M2 2L12 12M12 2L2 12" stroke="white" strokeWidth="1.500" />
          </svg>
        </button>
      </div>
      <svg width="99" height="75" viewBox="0 0 99 75" fill="none">
        <defs>
          <linearGradient id="viewCone" x1="0" y1="0" x2="0.300" y2="1">
            <stop offset="0" stopColor="#e9cf93" />
            <stop offset="1" stopColor="#ffb000" />
          </linearGradient>
        </defs>
        <path d="M13.500 25V50.500H40Q80 50.500 95.500 12.500H20" stroke="#888888" />
        <path d="M51 37Q60 26 73 27L71 44L67 46Z" fill="url(#viewCone)" />
        <circle cx="16" cy="28" r="2" stroke="#bbbbbb" />
        <path d="M5.500 12.500H19.500V25.500H5.500Z" stroke="black" />
        <circle cx="69.500" cy="51" r="4.500" fill="#ffb000" stroke="#333333" strokeWidth="1.300" />
      </svg>
    </section>
  );
}

function Viewport() {
  return (
    <main className="relative flex min-h-0 flex-1 flex-col bg-linear-to-b from-[#f0f0f0] to-[#cacaca]">
      <BuildingModel />
      <div className="relative flex items-center justify-between pt-[23px] pr-[26px] pl-[22px]">
        <h1 className="flex items-center gap-1">
          <Icon size={15}>
            <path d="M4 3L10.500 1L13.500 4.500V11.500L7 14L1 10.500V6.500ZM4 3L7 7.500L13.500 5.500M7 7.500L1.500 6.500M7 7.500V14" strokeLinejoin="round" />
          </Icon>
          <span className="text-[13px]">3D</span>
        </h1>
        <button type="button" aria-label="Maximize view">
          <Icon size={14}>
            <path d="M0.500 0.500H13.500V12.500H0.500Z" fill="white" />
            <path d="M0.500 3.500H13.500" />
          </Icon>
        </button>
      </div>
      <div className="relative mt-auto flex justify-end">
        <Minimap />
      </div>
      <footer className="relative flex h-[35px] items-center pt-1 pr-44 pl-[21px]">
        <p>Make component transparent by clicking.</p>
        <p className="ml-auto">Role: Architectural Checking</p>
        <p className="ml-12">Selected: 0</p>
      </footer>
    </main>
  );
}

/* ---------- page ---------- */

function Header() {
  return (
    <header className="flex h-[59px] shrink-0 items-center bg-[#222e47] pr-6 pl-[17px] text-[13px] text-[#9fb0d3]">
      <Logo />
      <nav className="ml-[29px] flex items-center gap-[29px] pb-0.5">
        {menuItems.map((item) => (
          <a
            key={item}
            href="#"
            className={clsx(
              "border-b leading-4",
              item === "MODEL" ? "border-[#ffb81c] text-[#ffb81c]" : "border-transparent"
            )}
          >
            {item}
          </a>
        ))}
        <button type="button" aria-label="Add layout" className="ml-1">
          <Icon size={10}>
            <path d="M5 0V10M0 5H10" />
          </Icon>
        </button>
      </nav>
      <div className="ml-auto flex items-center gap-6 pb-0.5">
        <a href="#" className="text-[#ffb81c]">ALL TO-DO (3/7)</a>
        <a href="#">VIEWS</a>
        <button
          type="button"
          aria-label="Help"
          className="flex h-[22px] w-[22px] items-center justify-center rounded-full bg-[#e4e6ea] text-base font-bold text-[#1a73d9]"
        >
          ?
        </button>
      </div>
    </header>
  );
}

export default function App() {
  return (
    <div className="flex h-screen flex-col overflow-hidden bg-white font-['Noto_Sans',sans-serif] text-[12px] text-black">
      <Header />
      <Toolbar />
      <Viewport />
    </div>
  );
}
